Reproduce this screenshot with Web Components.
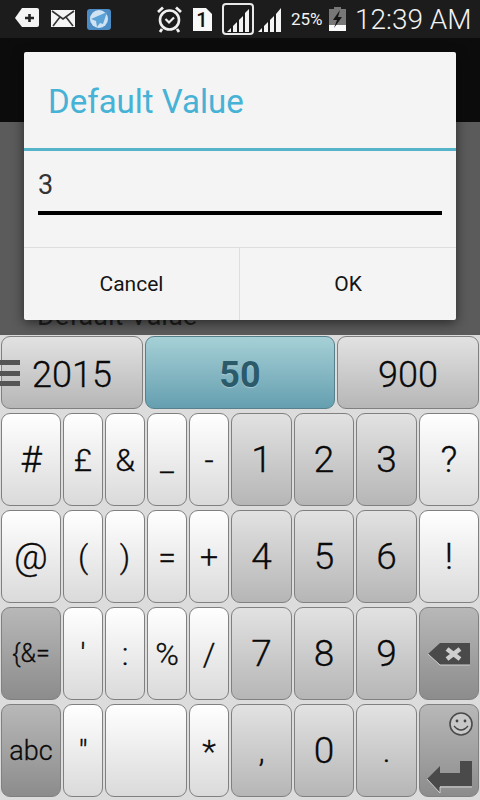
<!DOCTYPE html>
<html>
<head>
<meta charset="utf-8">
<style>
  html, body { margin: 0; padding: 0; width: 480px; height: 800px; overflow: hidden; background: #dcdcdc; }
  body { font-family: Roboto, "Liberation Sans", sans-serif; }
</style>
</head>
<body>
<phone-screen>
  <status-bar slot="status"></status-bar>
  <alert-dialog slot="dialog" heading="Default Value" value="3"></alert-dialog>
  <key-board slot="keyboard"></key-board>
</phone-screen>

<script>
class PhoneScreen extends HTMLElement {
  constructor() {
    super();
    this.shadowDOM = this.attachShadow({ mode: 'open' });
    this.shadowDOM.innerHTML = `
      <style>
        :host { display: flex; flex-direction: column; position: relative; width: 480px; height: 800px; overflow: hidden; }
        .action { height: 84px; background: #0c0c0c; }
        .content { height: 213px; background: #5b5b5b; box-sizing: border-box; padding: 178px 0 0 37px; overflow: hidden; }
        .content span { font-size: 27px; line-height: 32px; color: #1f1f1f; white-space: nowrap; }
      </style>
      <slot name="status"></slot>
      <div class="action"></div>
      <div class="content"><span>Default Value</span></div>
      <slot name="keyboard"></slot>
      <slot name="dialog"></slot>
    `;
  }
}

class StatusBar extends HTMLElement {
  constructor() {
    super();
    this.shadowDOM = this.attachShadow({ mode: 'open' });
    this.shadowDOM.innerHTML = `
      <style>
        :host { display: flex; align-items: center; height: 38px; background: #1c1c1c; color: #f2f2f2; padding-left: 15px; box-sizing: border-box; }
        svg { display: block; flex: none; }
        .pct { font-size: 17px; margin-left: 9px; width: 33px; white-space: nowrap; }
        .time { font-size: 28px; margin-left: 9px; white-space: nowrap; font-weight: 300; }
      </style>
      <svg width="24" height="22" viewBox="0 0 24 22" style="margin-top:-2px">
        <path d="M7 1H22a2 2 0 0 1 2 2V18a2 2 0 0 1-2 2H7L0 11Z" fill="#f4f4f4"/>
        <path d="M10 11H19M14.5 7V15" stroke="#222" stroke-width="2.6"/>
      </svg>
      <svg width="24" height="18" viewBox="0 0 24 18" style="margin-left:12px;margin-top:0">
        <rect width="24" height="17" fill="#f4f4f4"/>
        <path d="M1 1L12 9L23 1M2 16L9 7M22 16L15 7" fill="none" stroke="#333" stroke-width="1.6"/>
      </svg>
      <svg width="24" height="21" viewBox="0 0 24 21" style="margin-left:12px">
        <rect width="24" height="21" rx="3" fill="#4c8cc4"/>
        <circle cx="12" cy="10" r="9" fill="#cfe3f2"/>
        <path d="M20 3L4 10L9 12L10 18L13 14L16 15Z" fill="#5ba3d6"/>
      </svg>
      <svg width="25" height="27" viewBox="0 0 25 27" style="margin-left:46px;margin-top:1px">
        <circle cx="12.5" cy="14" r="9.5" fill="none" stroke="#f0f0f0" stroke-width="2.6"/>
        <path d="M1 6L6 1.5M24 6L19 1.5M5 23L3 26M20 23L22 26" stroke="#f0f0f0" stroke-width="2.8"/>
        <path d="M8.5 13L12 16.5L17 11.5" fill="none" stroke="#f0f0f0" stroke-width="2.2"/>
      </svg>
      <svg width="19" height="23" viewBox="0 0 19 23" style="margin-left:11px;margin-top:0">
        <path d="M0 0H13L19 6V23H0Z" fill="#f8f8f8"/>
        <text x="9" y="19" font-family="Roboto, sans-serif" font-size="20" font-weight="500" text-anchor="middle" fill="#111">1</text>
      </svg>
      <svg width="32" height="32" viewBox="0 0 32 32" style="margin-left:10px;margin-top:0">
        <rect x="1" y="1" width="30" height="30" rx="3" fill="none" stroke="#e8e8e8" stroke-width="2"/>
        <path d="M5 29H9V25ZM11 29H15V19L11 23ZM17 29H21V13L17 17ZM23 29H27V6L23 10Z" fill="#f4f4f4"/>
      </svg>
      <svg width="24" height="24" viewBox="0 0 24 24" style="margin-left:4px;margin-top:1px">
        <path d="M0 24H4V20ZM6 24H10V14L6 18ZM12 24H16V8L12 12ZM18 24H23V0L18 6Z" fill="#f4f4f4"/>
      </svg>
      <span class="pct">25%</span>
      <svg width="17" height="24" viewBox="0 0 17 24" style="margin-left:5px;margin-top:0">
        <path d="M5 0H12V2H17V24H0V2H5Z" fill="#777"/>
        <rect y="18" width="17" height="6" fill="#fafafa"/>
        <path d="M11 3L4 13H8L5 21L13 10H9Z" fill="#151515"/>
      </svg>
      <span class="time">12:39 AM</span>
    `;
  }
}

class AlertDialog extends HTMLElement {
  constructor() {
    super();
    this.shadowDOM = this.attachShadow({ mode: 'open' });
  }

  connectedCallback() {
    this.shadowDOM.innerHTML = `
      <style>
        :host { display: flex; flex-direction: column; position: absolute; left: 24px; top: 52px; width: 432px; height: 268px; background: #f4f4f4; border-radius: 2px; box-shadow: 0 3px 12px rgba(0,0,0,.55); }
        .title { height: 99px; box-sizing: border-box; padding: 29px 0 0 24px; font-size: 33px; line-height: 42px; color: #45b2d6; border-bottom: 3px solid #55b4ca; }
        .body { flex: 1; padding: 0 14px; }
        .field { height: 64px; box-sizing: border-box; padding-top: 17px; font-size: 27px; line-height: 34px; color: #333; border-bottom: 4px solid #000; }
        .buttons { display: flex; height: 72px; border-top: 1px solid #dedede; }
        .buttons div { display: flex; align-items: center; justify-content: center; font-size: 21px; color: #151515; }
        .cancel { flex: 0 0 215px; }
        .ok { flex: 1; border-left: 1px solid #dedede; }
      </style>
      <div class="title">${this.getAttribute('heading')}</div>
      <div class="body"><div class="field">${this.getAttribute('value')}</div></div>
      <div class="buttons"><div class="cancel">Cancel</div><div class="ok">OK</div></div>
    `;
  }
}

class KbKey extends HTMLElement {
  constructor() {
    super();
    this.shadowDOM = this.attachShadow({ mode: 'open' });
    this.shadowDOM.innerHTML = `
      <style>
        :host { display: flex; align-items: center; justify-content: center; position: relative; box-sizing: border-box; border: 1px solid #808080; border-radius: 9px; color: #0a0a0a; font-size: 32px; font-weight: 300; -webkit-text-stroke: .3px #0a0a0a; background: linear-gradient(#ffffff, #dadada); white-space: nowrap; }
        :host([tone="mid"]) { background: linear-gradient(#e2e2e2, #b6b6b6); }
        :host([tone="dark"]) { background: linear-gradient(#b8b8b8, #8c8c8c); }
        :host([tone="teal"]) { background: linear-gradient(#a6d0d6, #659fb0); color: #2b5a6b; font-weight: 700; -webkit-text-stroke: 0; border-color: #55808c; text-shadow: 0 1px 1px rgba(255,255,255,.35); }
        :host([big]) { font-size: 37px; }
      </style>
      <slot></slot>
    `;
  }
}

class KeyBoard extends HTMLElement {
  constructor() {
    super();
    this.shadowDOM = this.attachShadow({ mode: 'open' });
    const rows = [
      ['#', '£', '&', '_', '-', '1', '2', '3', '?'],
      ['@', '(', ')', '=', '+', '4', '5', '6', '!'],
      ['{&=', "'", ':', '%', '/', '7', '8', '9', 'del'],
      ['abc', '"', 'space', '*', ',', '0', '.', 'enter']
    ];
    const cells = rows.flat().map(label => {
      if (label === 'del') {
        return `<kb-key tone="dark"><svg width="44" height="24" viewBox="0 0 44 24"><path d="M13 1H43V23H13L1 12Z" fill="#4a4a4a"/><path d="M1 12L13 23H43" fill="none" stroke="#d0d0d0" stroke-width="1"/><path d="M20 7L33 17M33 7L20 17" stroke="#cfcfcf" stroke-width="4.5"/></svg></kb-key>`;
      }
      if (label === 'enter') {
        return `<kb-key tone="dark"><svg width="58" height="91" viewBox="0 0 58 91">
          <circle cx="41" cy="19" r="11" fill="#c8c8c8" stroke="#4a4a4a" stroke-width="1.6"/>
          <circle cx="37" cy="16" r="1.4" fill="#444"/><circle cx="45" cy="16" r="1.4" fill="#444"/>
          <path d="M34 21Q41 29 48 21" fill="none" stroke="#444" stroke-width="1.4"/>
          <path d="M7 74L20 61V68H40V56H52V81H20V88Z" fill="#4a4a4a"/>
          <path d="M7 74L20 88V82H52" fill="none" stroke="#d0d0d0" stroke-width="1"/>
        </svg></kb-key>`;
      }
      if (label === 'space') return `<kb-key class="space"></kb-key>`;
      const isDigit = /[0-9]/.test(label);
      const isWide = label === '#' || label === '@' || label === '?' || label === '!';
      const tone = (isDigit || label === ',' || label === '.') ? 'tone="mid"'
        : (label === 'abc' || label === '{&=') ? 'tone="dark"' : '';
      const small = label === 'abc' ? 'style="font-size:27px"' : label === '{&=' ? 'style="font-size:25px"' : '';
      return `<kb-key ${tone} ${isDigit || isWide ? 'big' : ''} ${small}>${label}</kb-key>`;
    }).join('');
    this.shadowDOM.innerHTML = `
      <style>
        :host { display: flex; flex-direction: column; gap: 4px; flex: 1; box-sizing: border-box; padding: 1px 1px 3px; background: #dcdcdc; }
        .suggest { display: grid; grid-template-columns: 142px 190px 142px; gap: 2px; height: 73px; }
        .suggest kb-key { font-size: 36px; padding-top: 4px; }
        .keys { display: grid; grid-template-columns: 60px repeat(4, 40px) 61px 60px 61px 60px; grid-auto-rows: 93px; gap: 4px 2px; }
        .space { grid-column: span 2; }
        .menu { position: absolute; left: -2px; top: 23px; width: 20px; height: 26px; background: repeating-linear-gradient(#555 0 5px, transparent 5px 10.5px); }
      </style>
      <div class="suggest">
        <kb-key tone="mid"><div class="menu"></div>2015</kb-key>
        <kb-key tone="teal">50</kb-key>
        <kb-key tone="mid">900</kb-key>
      </div>
      <div class="keys">${cells}</div>
    `;
  }
}

customElements.define('kb-key', KbKey);
customElements.define('key-board', KeyBoard);
customElements.define('alert-dialog', AlertDialog);
customElements.define('status-bar', StatusBar);
customElements.define('phone-screen', PhoneScreen);
</script>
</body>
</html>
